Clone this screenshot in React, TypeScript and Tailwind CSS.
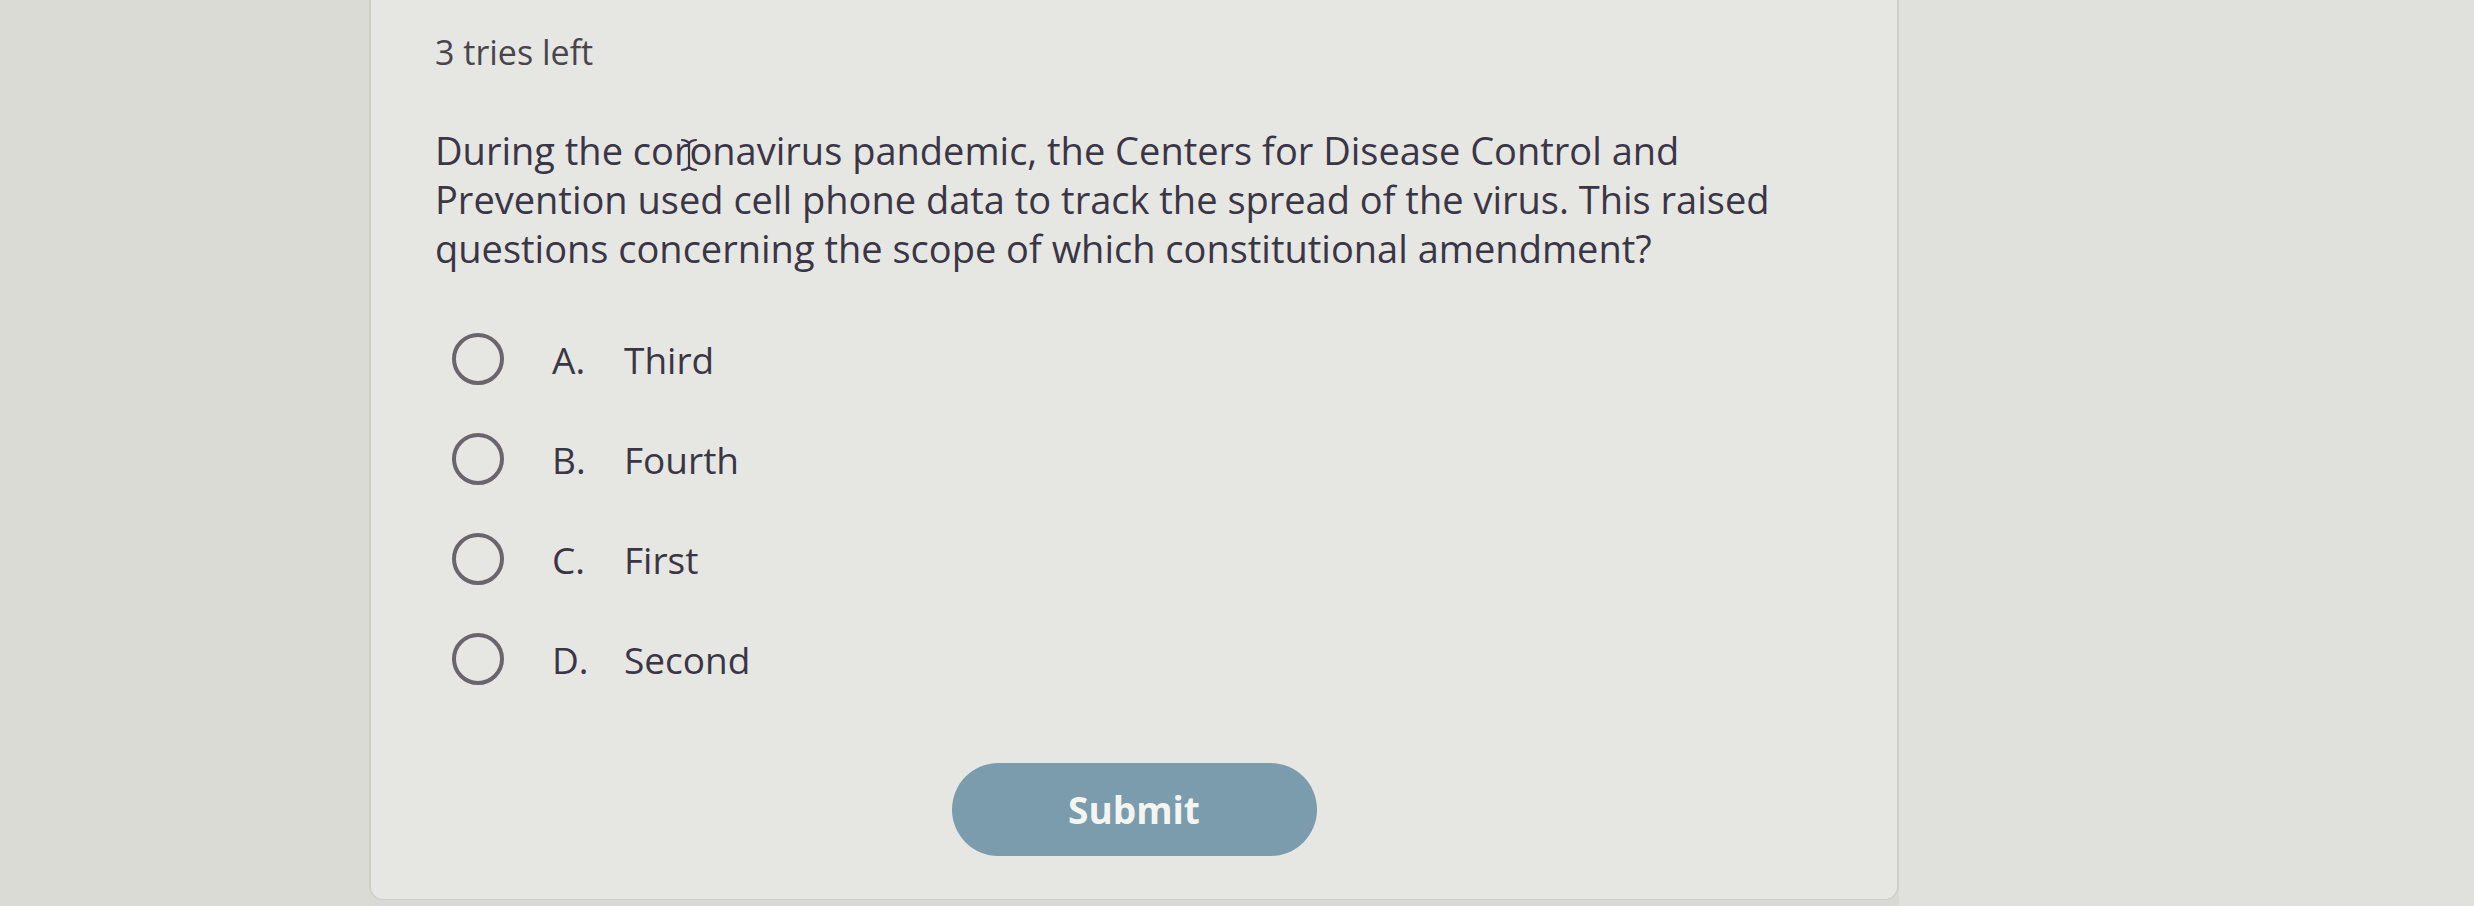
import React from "react";

const options = [
  { letter: "A.", label: "Third" },
  { letter: "B.", label: "Fourth" },
  { letter: "C.", label: "First" },
  { letter: "D.", label: "Second" },
];

export default function App() {
  return (
    <div
      className="flex w-[2474px] h-[906px] overflow-hidden bg-[#dadad5]"
      style={{ fontFamily: '"Open Sans", "Noto Sans", sans-serif' }}
    >
      <div className="w-[369px] shrink-0 bg-[#dbdbd6]" />
      <div className="w-[1530px] shrink-0 h-[900px] bg-[#e6e6e2] border-x-2 border-b border-[#cfcfca] rounded-b-[14px] px-[64px] pt-[29px] flex flex-col">
        <div className="text-[34px] leading-[46px] text-[#48454f]">3 tries left</div>

        <div className="relative mt-[51px] w-[1420px] text-[38px] leading-[49px] text-[#3a3646]">
          During the coronavirus pandemic, the Centers for Disease Control and Prevention used cell phone data to
          track the spread of the virus. This raised questions concerning the scope of which constitutional
          amendment?
          <svg
            className="absolute left-[244px] top-[12px]"
            width="20"
            height="34"
            viewBox="0 0 20 34"
            fill="none"
            stroke="#3a3646"
            strokeWidth="2.2"
            strokeLinecap="round"
          >
            <path d="M3 2 Q7 2 10 5 Q13 2 17 2" />
            <path d="M10 5 V29" />
            <path d="M3 32 Q7 32 10 29 Q13 32 17 32" />
          </svg>
        </div>

        <div className="mt-[36px] flex flex-col">
          {options.map((o) => (
            <div key={o.letter} className="h-[100px] flex items-center pl-[17px]">
              <div className="w-[52px] h-[52px] rounded-full border-[4px] border-[#68666c] shrink-0" />
              <div className="ml-[48px] w-[72px] text-[37px] leading-none text-[#3a3646]">{o.letter}</div>
              <div className="text-[37px] leading-none text-[#3a3646]">{o.label}</div>
            </div>
          ))}
        </div>

        <div className="mt-[54px] flex justify-center">
          <button className="w-[365px] h-[93px] rounded-full bg-[#7a9cad] text-[#f5f5f0] text-[37px] font-bold">
            Submit
          </button>
        </div>
      </div>
      <div className="flex-1 bg-[#e0e0dc]" />
    </div>
  );
}
